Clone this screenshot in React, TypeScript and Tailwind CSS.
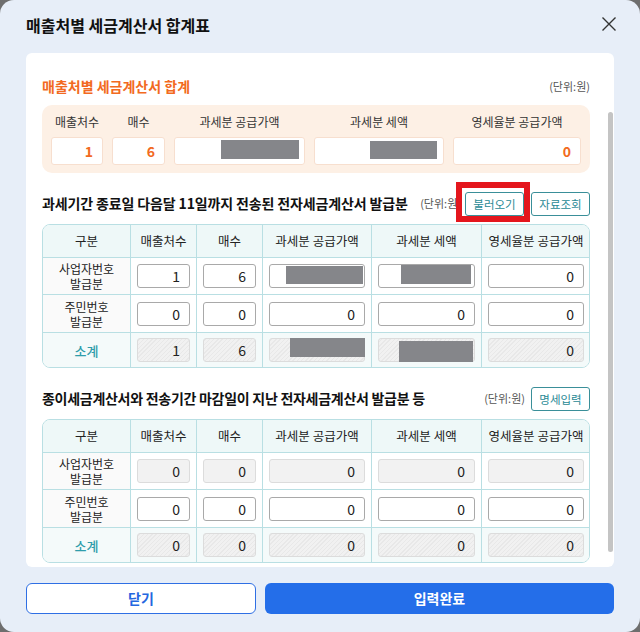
import React from 'react'

type Kind = 'input' | 'disabled' | 'sum'
type Cell = { v: string; kind: Kind; redact?: string }
type Row = { label: string[]; sum?: boolean; h: string; cells: Cell[] }

const cols = 'grid grid-cols-[87px_66px_66px_109px_110px_109px]'
const heads = ['구분', '매출처수', '매수', '과세분 공급가액', '과세분 세액', '영세율분 공급가액']

function Redact({ className }: { className: string }) {
  return <div className={`absolute bg-[#85868a] ${className}`} />
}

function Field({ v, kind, redact }: Cell) {
  const look =
    kind === 'input'
      ? 'bg-white border-[#a9a9a9]'
      : kind === 'disabled'
        ? 'bg-[#f2f2f2] border-[#dcdcdc]'
        : 'bg-[repeating-linear-gradient(-45deg,#f1f1f1_0_2px,#e8e8e8_2px_3px)] border-[#dcdcdc]'
  return (
    <div className={`relative h-[24px] w-full rounded-[3px] border pr-[9px] text-right text-[14px] leading-[22px] text-[#222] ${look}`}>
      {v}
      {redact && <Redact className={redact} />}
    </div>
  )
}

function DataTable({ rows }: { rows: Row[] }) {
  return (
    <div className="overflow-hidden rounded-[8px] border border-[#b9dfe3]">
      <div className={`${cols} h-[32px] bg-[#eef8f8] text-[12.5px] text-[#222]`}>
        {heads.map((h, i) => (
          <div key={h} className={`flex items-center justify-center ${i > 0 ? 'border-l border-[#b9dfe3]' : ''}`}>
            {h}
          </div>
        ))}
      </div>
      {rows.map((r, ri) => (
        <div key={ri} className={`${cols} ${r.h} border-t border-[#b9dfe3] ${r.sum ? 'bg-[#f4fafa]' : 'bg-white'}`}>
          <div
            className={`flex items-center justify-center text-center leading-[15px] ${
              r.sum ? 'text-[13px] font-medium text-[#2f9dab]' : 'bg-[#fafafa] text-[12px] text-[#222]'
            }`}
          >
            <p>
              {r.label.map((l, li) => (
                <React.Fragment key={l}>
                  {li > 0 && <br />}
                  {l}
                </React.Fragment>
              ))}
            </p>
          </div>
          {r.cells.map((c, ci) => (
            <div key={ci} className="flex items-center border-l border-[#b9dfe3] px-[6px]">
              <Field {...c} />
            </div>
          ))}
        </div>
      ))}
    </div>
  )
}

function OutlineButton({ children }: { children: React.ReactNode }) {
  return (
    <button className="h-[24px] w-[59px] rounded-[3px] border border-[#3a8f99] bg-white text-[11.5px] text-[#2a8a95]">
      {children}
    </button>
  )
}

const table1: Row[] = [
  {
    label: ['사업자번호', '발급분'],
    h: 'h-[37px]',
    cells: [
      { v: '1', kind: 'input' },
      { v: '6', kind: 'input' },
      { v: '', kind: 'input', redact: 'left-[16px] top-[1px] h-[18px] w-[77px]' },
      { v: '', kind: 'input', redact: 'left-[22px] top-0 h-[19px] w-[70px]' },
      { v: '0', kind: 'input' },
    ],
  },
  {
    label: ['주민번호', '발급분'],
    h: 'h-[38px]',
    cells: [
      { v: '0', kind: 'input' },
      { v: '0', kind: 'input' },
      { v: '0', kind: 'input' },
      { v: '0', kind: 'input' },
      { v: '0', kind: 'input' },
    ],
  },
  {
    label: ['소계'],
    sum: true,
    h: 'h-[35px]',
    cells: [
      { v: '1', kind: 'sum' },
      { v: '6', kind: 'sum' },
      { v: '', kind: 'sum', redact: 'left-[20px] -top-[1px] h-[19px] w-[75px]' },
      { v: '', kind: 'sum', redact: 'left-[20px] top-[2px] h-[21px] w-[74px]' },
      { v: '0', kind: 'sum' },
    ],
  },
]

const table2: Row[] = [
  {
    label: ['사업자번호', '발급분'],
    h: 'h-[37px]',
    cells: [
      { v: '0', kind: 'disabled' },
      { v: '0', kind: 'disabled' },
      { v: '0', kind: 'disabled' },
      { v: '0', kind: 'disabled' },
      { v: '0', kind: 'disabled' },
    ],
  },
  {
    label: ['주민번호', '발급분'],
    h: 'h-[38px]',
    cells: [
      { v: '0', kind: 'input' },
      { v: '0', kind: 'input' },
      { v: '0', kind: 'input' },
      { v: '0', kind: 'input' },
      { v: '0', kind: 'input' },
    ],
  },
  {
    label: ['소계'],
    sum: true,
    h: 'h-[35px]',
    cells: [
      { v: '0', kind: 'sum' },
      { v: '0', kind: 'sum' },
      { v: '0', kind: 'sum' },
      { v: '0', kind: 'sum' },
      { v: '0', kind: 'sum' },
    ],
  },
]

const summary = [
  { label: '매출처수', v: '1' },
  { label: '매수', v: '6' },
  { label: '과세분 공급가액', v: '', redact: 'left-[46px] top-[2px] h-[19px] w-[78px]' },
  { label: '과세분 세액', v: '', redact: 'left-[55px] top-[3px] h-[18px] w-[67px]' },
  { label: '영세율분 공급가액', v: '0' },
]

export default function App() {
  return (
    <div className="h-[632px] w-[640px] bg-[#6e6e6e] font-['Noto_Sans_CJK_KR','Noto_Sans',sans-serif]">
      <div className="flex h-full flex-col rounded-[14px] bg-[#e7eef8] px-[26px]">
        <div className="flex h-[53px] items-start justify-between pt-[14px]">
          <h1 className="text-[16px] font-bold leading-[22px] text-[#111]">매출처별 세금계산서 합계표</h1>
          <button className="-mr-[3px] mt-[2px] text-[#333]">
            <svg width="16" height="16" viewBox="0 0 16 16" fill="none" stroke="currentColor" strokeWidth="1.4">
              <path d="M1.5 1.5l13 13M14.5 1.5l-13 13" />
            </svg>
          </button>
        </div>

        <div className="relative h-[514px] overflow-hidden rounded-[6px] bg-white pl-[16px] pr-[24px] pt-[23px]">
          <div className="flex h-[20px] items-center justify-between">
            <h2 className="text-[14px] font-bold text-[#f26a21]">매출처별 세금계산서 합계</h2>
            <span className="text-[11px] text-[#555]">(단위:원)</span>
          </div>

          <div className="mt-[9px] grid h-[68px] grid-cols-[52px_53px_131px_130px_1fr] gap-x-[9px] rounded-[10px] bg-[#fdf0e5] px-[9px] pt-[9px]">
            {summary.map((s) => (
              <div key={s.label} className="flex flex-col">
                <div className="h-[16px] text-center text-[12px] leading-[16px] text-[#333]">{s.label}</div>
                <div className="relative mt-[7px] h-[28px] rounded-[3px] border border-[#f7dfcf] bg-white pr-[9px] text-right text-[14px] font-bold leading-[26px] text-[#f26a21]">
                  {s.v}
                  {s.redact && <Redact className={s.redact} />}
                </div>
              </div>
            ))}
          </div>

          <div className="mt-[18px] flex h-[24px] items-center">
            <h3 className="text-[14px] font-bold tracking-[-0.01em] text-[#111]">
              과세기간 종료일 다음달 11일까지 전송된 전자세금계산서 발급분
            </h3>
            <span className="ml-auto text-[11px] text-[#555]">(단위:원)</span>
            <div className="relative ml-[4px]">
              <OutlineButton>불러오기</OutlineButton>
              <div className="absolute -left-[9px] -top-[8px] h-[40px] w-[74px] border-[6px] border-[#e4161d]" />
            </div>
            <div className="ml-[7px]">
              <OutlineButton>자료조회</OutlineButton>
            </div>
          </div>

          <div className="mt-[9px]">
            <DataTable rows={table1} />
          </div>

          <div className="mt-[18px] flex h-[24px] items-center">
            <h3 className="text-[14px] font-bold tracking-[-0.02em] text-[#111]">
              종이세금계산서와 전송기간 마감일이 지난 전자세금계산서 발급분 등
            </h3>
            <span className="ml-auto text-[11px] text-[#555]">(단위:원)</span>
            <div className="ml-[6px]">
              <OutlineButton>명세입력</OutlineButton>
            </div>
          </div>

          <div className="mt-[9px]">
            <DataTable rows={table2} />
          </div>

          <div className="absolute right-[1px] top-[59px] h-[440px] w-[5px] rounded-full bg-[#c4c4c4]" />
        </div>

        <div className="mt-[16px] grid grid-cols-[230px_1fr] gap-[9px]">
          <button className="h-[31px] rounded-[6px] border border-[#2f6fe4] bg-white text-[14px] font-bold text-[#2467e0]">
            닫기
          </button>
          <button className="h-[31px] rounded-[6px] bg-[#246ee9] text-[14px] font-bold text-white">입력완료</button>
        </div>
      </div>
    </div>
  )
}
